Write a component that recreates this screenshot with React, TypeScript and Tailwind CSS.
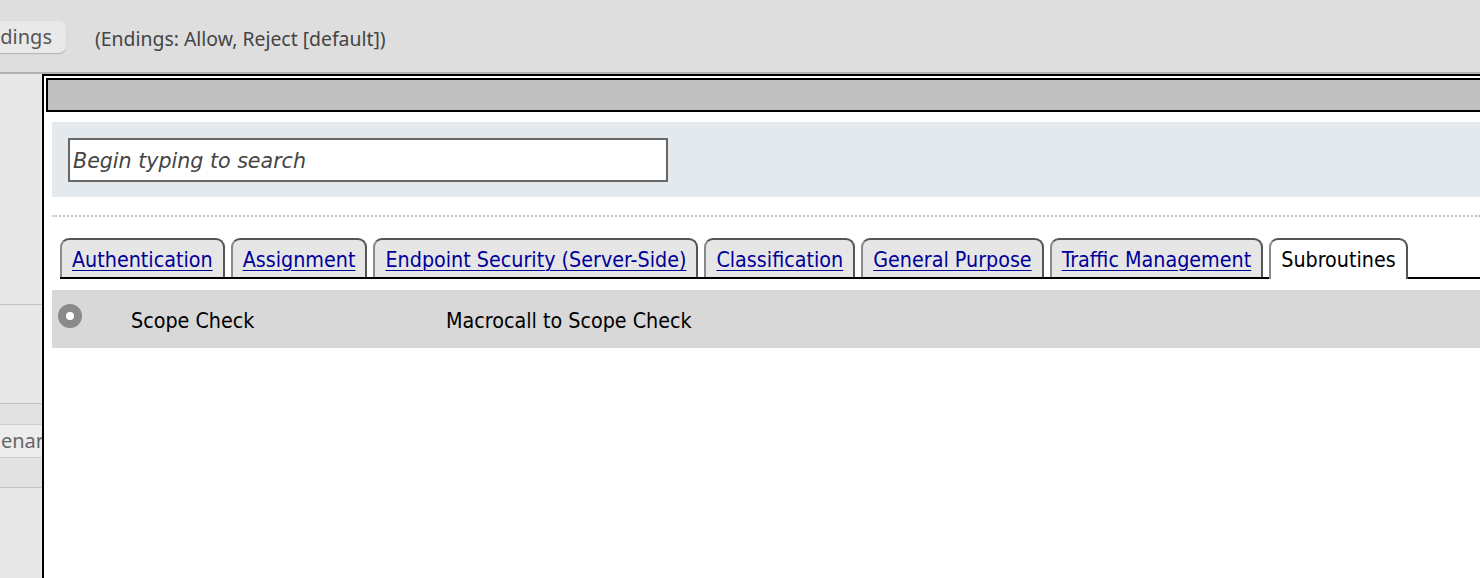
import React from "react";

const tabs = [
  "Authentication",
  "Assignment",
  "Endpoint Security (Server-Side)",
  "Classification",
  "General Purpose",
  "Traffic Management",
];

const tahoma = "font-['DejaVu_Sans_Condensed','DejaVu_Sans',sans-serif]";

export default function App() {
  return (
    <div className="w-[1480px] h-[578px] overflow-hidden bg-[#dedede] flex flex-col">
      {/* top bar */}
      <div className="h-[72px] flex items-center shrink-0 font-['Noto_Sans',sans-serif]">
        <div className="h-[32px] ml-[-40px] w-[106px] rounded-[7px] bg-[#e9e9e9] shadow-[0_1px_1px_rgba(0,0,0,0.2)] flex items-center justify-end pr-[14px] text-[20px] text-[#555] mt-[2px]">
          dings
        </div>
        <div className="ml-[29px] text-[19.4px] text-[#444] mt-[5px]">
          (Endings: Allow, Reject [default])
        </div>
      </div>
      <div className="h-[2px] bg-[#b2b2b2] shrink-0" />
      <div className="flex flex-1 min-h-0">
        {/* left column */}
        <div className="w-[42px] shrink-0 bg-[#e8e8e8] flex flex-col font-['Noto_Sans',sans-serif]">
          <div className="h-[231px] border-b border-[#c4c4c4]" />
          <div className="h-[99px] border-b border-[#c4c4c4]" />
          <div className="h-[21px] bg-[#e2e2e2] border-b border-[#d0d0d0]" />
          <div className="h-[33px] bg-[#ececec] border-b border-[#cfcfcf] flex items-center justify-end text-[20px] text-[#666] overflow-hidden whitespace-nowrap">
            <span className="mr-[-2px]">enar</span>
          </div>
          <div className="h-[30px] bg-[#e2e2e2] border-b border-[#c4c4c4]" />
          <div className="flex-1" />
        </div>
        {/* main panel */}
        <div className="flex-1 min-w-0 border-l-2 border-t-2 border-black bg-white pt-[2px] pl-[2px] flex flex-col">
          <div className="h-[34px] border-2 border-r-0 border-black bg-[#c0c0c0] shrink-0" />
          <div className="pl-[6px] pt-[10px] flex flex-col">
            <div className="h-[75px] bg-[#e4e9ed] pl-[16px] pt-[16px]">
              <div className="w-[600px] h-[44px] border-2 border-[#666] bg-white flex items-center pl-[3px] pt-[3px] font-['DejaVu_Sans',sans-serif] italic text-[20.6px] text-[#444]">
                Begin typing to search
              </div>
            </div>
            <div className="mt-[18px] border-t-2 border-dotted border-[#c4c4c4]" />
            <div className={`mt-[21px] ml-[8px] flex items-end border-b-2 border-black h-[41px] ${tahoma}`}>
              {tabs.map((t) => (
                <div
                  key={t}
                  className="mr-[6px] h-[39px] rounded-t-[9px] border-2 border-b-0 border-[#555] border-l-[#8a8a8a] bg-[#e6e6e6] pl-[10px] pr-[10px] flex items-end pb-[1px] text-[21.3px]"
                >
                  <a className="text-[#000099] underline decoration-1 underline-offset-[3px] cursor-pointer">{t}</a>
                </div>
              ))}
              <div className="mb-[-2px] h-[41px] rounded-t-[9px] border-2 border-b-0 border-[#555] border-l-[#8a8a8a] bg-white pl-[10px] pr-[10px] flex items-end pb-[3px] text-[21.3px] text-black">
                Subroutines
              </div>
            </div>
            <div className={`mt-[11px] h-[58px] bg-[#d8d8d8] flex items-center ${tahoma} text-[21.3px] text-black`}>
              <div className="ml-[6px] w-[24px] h-[24px] rounded-full bg-[#8a8a8a] flex items-center justify-center mt-[-6px]">
                <div className="w-[8px] h-[8px] rounded-full bg-white" />
              </div>
              <span className="ml-[49px] w-[315px] mt-[3px]">Scope Check</span>
              <span className="mt-[3px]">Macrocall to Scope Check</span>
            </div>
          </div>
        </div>
      </div>
    </div>
  );
}
